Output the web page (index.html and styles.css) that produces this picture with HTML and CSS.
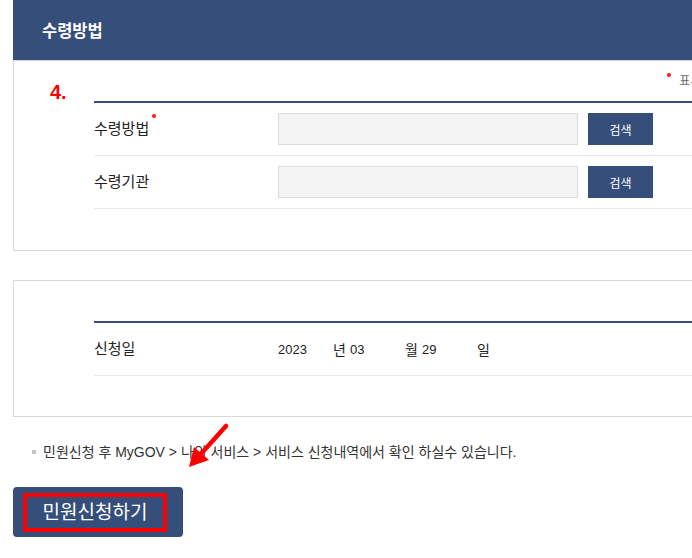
FILE: index.html
```html
<!DOCTYPE html>
<html lang="ko">

<head>
    <meta charset="UTF-8" />
    <meta name="viewport" content="width=device-width, initial-scale=1.0" />
    <title>민원신청 - 수령방법</title>
    <link rel="stylesheet" href="styles.css">
</head>

<body>
    <div class="page">
        <div class="section-title">수령방법</div>

        <div class="panel">
            <div class="panel-head">
                <span class="step-no">4.</span>
                <span class="required-note"><i class="dot"></i>표시는 필수 입력 항목입니다.</span>
            </div>
            <div class="form-table">
                <div class="form-row">
                    <div class="form-label">수령방법<i class="dot label-dot"></i></div>
                    <div class="form-field">
                        <input type="text" class="field-input" readonly>
                        <button class="btn-search">검색</button>
                    </div>
                </div>
                <div class="form-row">
                    <div class="form-label">수령기관</div>
                    <div class="form-field">
                        <input type="text" class="field-input" readonly>
                        <button class="btn-search">검색</button>
                    </div>
                </div>
            </div>
        </div>

        <div class="panel panel-date">
            <div class="form-table">
                <div class="form-row">
                    <div class="form-label">신청일</div>
                    <div class="form-field date-field">
                        <span class="date-num">2023</span>
                        <span class="date-unit">년</span>
                        <span class="date-num">03</span>
                        <span class="date-unit">월</span>
                        <span class="date-num">29</span>
                        <span class="date-unit">일</span>
                    </div>
                </div>
            </div>
        </div>

        <p class="info-note">민원신청 후 MyGOV &gt; 나의 서비스 &gt; 서비스 신청내역에서 확인 하실수 있습니다.</p>

        <button class="btn-submit"><span class="btn-submit-inner">민원신청하기</span></button>

        <!-- 안내용 화살표 -->
        <svg class="guide-arrow" width="60" height="55" viewBox="0 0 60 55">
            <line x1="46" y1="6" x2="20" y2="35" stroke="#ff0000" stroke-width="4.5" stroke-linecap="round" />
            <polygon points="9,47 14,27 29,40" fill="#ff0000" />
        </svg>
    </div>
</body>

</html>
```

FILE: styles.css
```css
* {
    margin: 0;
    padding: 0;
    box-sizing: border-box;
    font-family: "Liberation Sans", "Noto Sans CJK KR", sans-serif;
}

html,
body {
    overflow: hidden;
    background: #fff;
}

.page {
    position: relative;
    width: 893px;
    margin-left: 13px;
    color: #222;
}

.section-title {
    height: 60px;
    padding-left: 29px;
    display: flex;
    align-items: center;
    background-color: #354e7a;
    color: white;
    font-size: 16.5px;
    font-weight: bold;
}

.panel {
    border: 1px solid #d8d8d8;
    padding: 0 80px 41px 80px;
}

.panel-head {
    height: 40px;
    display: flex;
    align-items: flex-start;
    margin-left: -44px;
}

.step-no {
    margin-top: 21px;
    color: #ff0000;
    font-size: 20px;
    font-weight: bold;
    line-height: 20px;
}

.required-note {
    margin-left: auto;
    margin-top: 11px;
    display: flex;
    align-items: flex-start;
    font-size: 12px;
    line-height: 18px;
    color: #666;
    white-space: nowrap;
}

.dot {
    display: inline-block;
    width: 4px;
    height: 4px;
    border-radius: 50%;
    background: #ff1a1a;
}

.required-note .dot {
    margin-top: 1px;
    margin-right: 8px;
}

.form-table {
    border-top: 2px solid #354e7a;
}

.form-row {
    display: flex;
    align-items: center;
    height: 53px;
    border-bottom: 1px solid #e8e8e8;
}

.form-label {
    width: 184px;
    font-size: 15px;
    line-height: 20px;
    color: #222;
    display: flex;
    align-items: flex-start;
}

.label-dot {
    margin-top: -5px;
    margin-left: 3px;
}

.form-field {
    display: flex;
    align-items: center;
}

.field-input {
    width: 300px;
    height: 32px;
    border: 1px solid #dcdcdc;
    background: #f4f4f4;
}

.btn-search {
    width: 65px;
    height: 32px;
    margin-left: 10px;
    border: none;
    background-color: #354e7a;
    color: white;
    font-size: 12px;
}

.panel-date {
    margin-top: 29px;
    padding-top: 40px;
    padding-bottom: 40px;
}

.date-field {
    font-size: 13px;
    color: #222;
}

.date-num {
    width: 55px;
}

.date-unit {
    width: 17px;
    font-size: 14px;
}

.info-note {
    margin-top: 25px;
    padding-left: 30px;
    position: relative;
    font-size: 14px;
    line-height: 20px;
    color: #333;
}

.info-note::before {
    content: "";
    position: absolute;
    left: 19px;
    top: 8px;
    width: 4px;
    height: 4px;
    background: #c4c4c4;
}

.btn-submit {
    margin-top: 25px;
    width: 170px;
    height: 50px;
    padding: 6px 16px 5px 10px;
    border: none;
    border-radius: 4px;
    background-color: #354e7a;
    display: block;
}

.btn-submit-inner {
    display: block;
    height: 39px;
    border: 4px solid #ff0000;
    color: white;
    font-size: 19px;
    line-height: 31px;
    text-align: center;
}

.guide-arrow {
    position: absolute;
    left: 167px;
    top: 420px;
}
```
